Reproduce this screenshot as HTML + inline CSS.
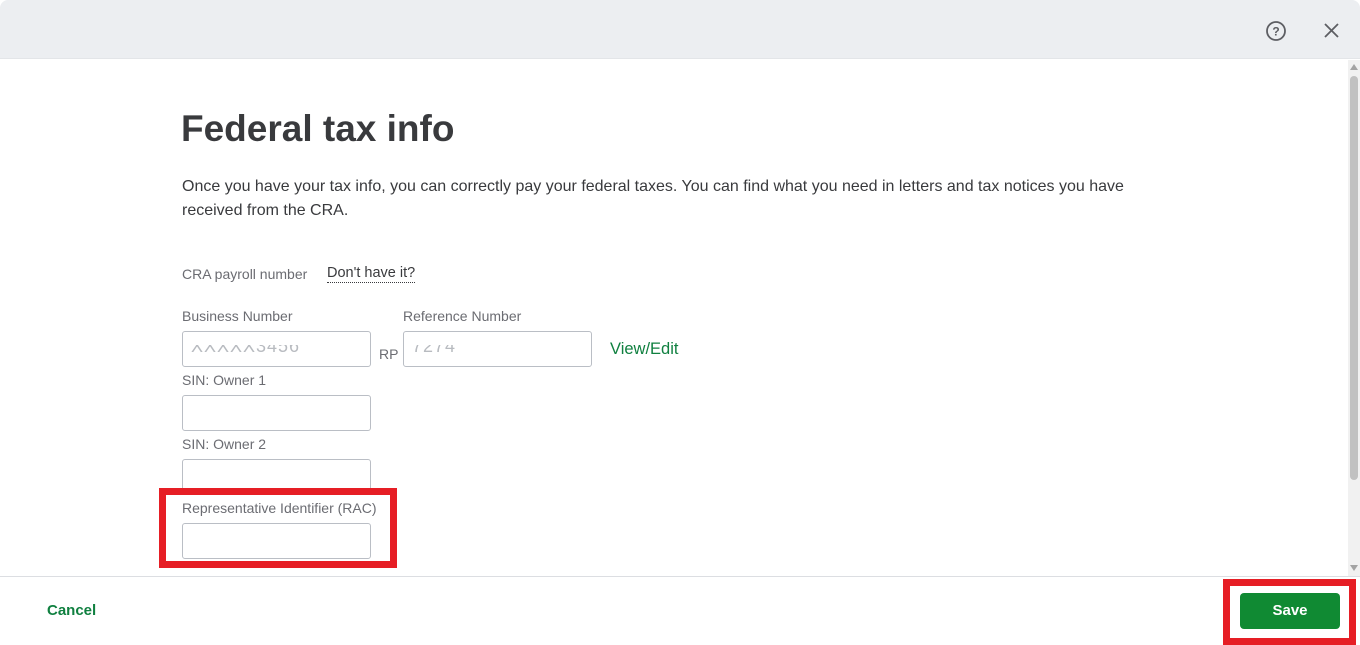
<!DOCTYPE html>
<html><head><style>
*{margin:0;padding:0;box-sizing:border-box}
body{width:1360px;height:645px;background:#fff;font-family:"Liberation Sans",Arial,sans-serif;position:relative;overflow:hidden;color:#393a3d}
.abs{position:absolute}
.hdr{left:0;top:0;width:1360px;height:59px;background:#eceef1;border-radius:8px 8px 0 0;border-bottom:1px solid #e3e5e8}
.lbl{font-size:14px;color:#6b6c72}
.inp{border:1px solid #babec5;border-radius:3px;height:36px;background:#fff;overflow:hidden}
.clip{position:absolute;left:0;top:13px;width:100%;height:12px;overflow:hidden}
.ghost{position:absolute;left:8px;top:-9px;font-size:18px;color:#b8bbc0;letter-spacing:1px}
.red{border:7px solid #e61e25}
</style></head><body>
<div class="abs hdr"></div>
<svg class="abs" style="left:1265px;top:20px" width="22" height="22" viewBox="0 0 22 22"><circle cx="11" cy="11" r="9" fill="none" stroke="#5d5e63" stroke-width="1.8"/><text x="11" y="15.5" font-size="12" font-weight="bold" text-anchor="middle" fill="#5d5e63" font-family="Liberation Sans">?</text></svg>
<svg class="abs" style="left:1323px;top:22px" width="17" height="17" viewBox="0 0 17 17"><path d="M2 2L15 15M15 2L2 15" stroke="#5d5e63" stroke-width="1.8"/></svg>
<div class="abs" style="left:1348px;top:60px;width:12px;height:516px;background:#f1f1f1"></div>
<div class="abs" style="left:1350px;top:76px;width:8px;height:404px;background:#c1c1c1;border-radius:4px"></div>
<div class="abs" style="left:1350px;top:64px;width:0;height:0;border-left:4px solid transparent;border-right:4px solid transparent;border-bottom:6px solid #a3a3a3"></div>
<div class="abs" style="left:1350px;top:565px;width:0;height:0;border-left:4px solid transparent;border-right:4px solid transparent;border-top:6px solid #a3a3a3"></div>

<div class="abs" style="left:181px;top:108px;font-size:37px;font-weight:bold;color:#393a3d">Federal tax info</div>
<div class="abs" style="left:182px;top:175px;width:980px;font-size:16px;line-height:24px;color:#393a3d">Once you have your tax info, you can correctly pay your federal taxes. You can find what you need in letters and tax notices you have received from the CRA.</div>
<div class="abs lbl" style="left:182px;top:266px">CRA payroll number</div>
<div class="abs" style="left:327px;top:265px;font-size:14.5px;color:#393a3d;border-bottom:1px dotted #393a3d;padding-bottom:1px">Don't have it?</div>

<div class="abs lbl" style="left:182px;top:308px">Business Number</div>
<div class="abs lbl" style="left:403px;top:308px">Reference Number</div>
<div class="abs inp" style="left:182px;top:331px;width:189px"><div class="clip"><span class="ghost">XXXXX3456</span></div></div>
<div class="abs lbl" style="left:379px;top:346px">RP</div>
<div class="abs inp" style="left:403px;top:331px;width:189px"><div class="clip"><span class="ghost">7274</span></div></div>
<div class="abs" style="left:610px;top:340px;font-size:16.5px;color:#108040">View/Edit</div>
<div class="abs lbl" style="left:182px;top:372px">SIN: Owner 1</div>
<div class="abs inp" style="left:182px;top:395px;width:189px"></div>
<div class="abs lbl" style="left:182px;top:436px">SIN: Owner 2</div>
<div class="abs inp" style="left:182px;top:459px;width:189px"></div>
<div class="abs lbl" style="left:182px;top:500px">Representative Identifier (RAC)</div>
<div class="abs inp" style="left:182px;top:523px;width:189px"></div>
<div class="abs red" style="left:159px;top:488px;width:238px;height:80px"></div>

<div class="abs" style="left:0;top:576px;width:1360px;height:69px;background:#fff;border-top:1px solid #dcdee2"></div>
<div class="abs" style="left:47px;top:602px;font-size:15px;font-weight:bold;color:#108040">Cancel</div>
<div class="abs" style="left:1240px;top:593px;width:100px;height:36px;background:#108a33;border-radius:4px;color:#fff;font-weight:bold;font-size:15px;text-align:center;line-height:36px">Save</div>
<div class="abs red" style="left:1223px;top:579px;width:133px;height:66px"></div>
</body></html>
